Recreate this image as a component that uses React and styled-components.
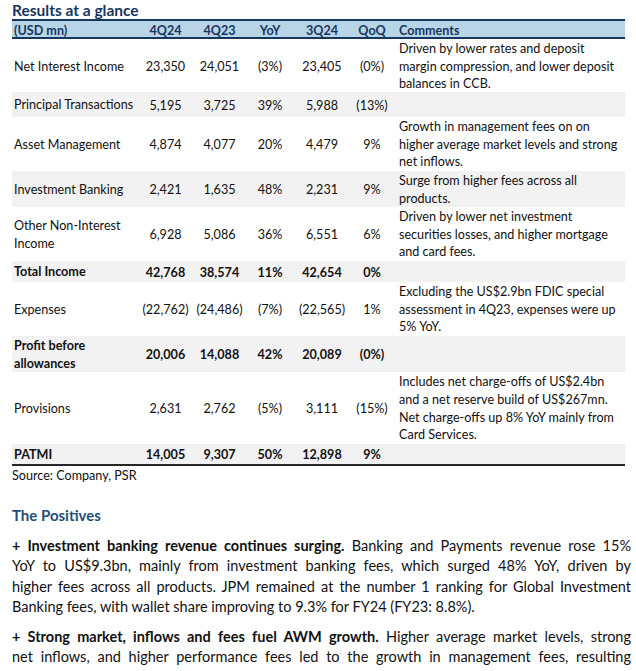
import React from 'react';
import styled, { createGlobalStyle } from 'styled-components';

const GlobalStyle = createGlobalStyle`
  html, body {
    margin: 0;
    padding: 0;
    background: #ffffff;
  }
  body {
    font-family: Lato, "Open Sans", sans-serif;
    color: #111111;
  }
`;

const Page = styled.div`
  width: 636px;
  height: 671px;
  overflow: hidden;
  padding: 0 5px 0 12px;
  box-sizing: border-box;
`;

const Title = styled.h2`
  margin: 0;
  height: 19px;
  line-height: 20px;
  font-size: 15.5px;
  font-weight: 700;
  color: #17365d;
`;

const Table = styled.div`
  width: 613px;
  font-size: 12.6px;
  border-bottom: 2px solid #262626;
`;

const Row = styled.div`
  display: grid;
  grid-template-columns: 130px 47px 61px 40px 64px 36px 1fr;
  align-items: center;
  height: ${p => p.h}px;
  padding-top: 1px;
  box-sizing: border-box;
  background: ${p => (p.shade ? '#f2f2f2' : '#ffffff')};
  font-weight: ${p => (p.bold ? 700 : 400)};
`;

const HeaderRow = styled(Row)`
  height: 20px;
  background: #b8d5e8;
  border-top: 2px solid #17365d;
  border-bottom: 2px solid #17365d;
  font-weight: 700;
  color: #17365d;
`;

const Label = styled.div`
  padding-left: 2px;
  line-height: 17.5px;
  white-space: nowrap;
`;

const Num = styled.div`
  text-align: center;
  white-space: nowrap;
`;

const Comment = styled.div`
  padding-left: 9px;
  line-height: 17.6px;
  white-space: nowrap;
`;

const Source = styled.div`
  font-size: 12.6px;
  height: 18px;
  line-height: 20px;
`;

const Heading = styled.h3`
  margin: 21px 0 11px;
  height: 20px;
  line-height: 20px;
  font-size: 15px;
  font-weight: 700;
  color: #1f4e79;
`;

const Para = styled.p`
  margin: 0 0 10px;
  width: 619px;
  font-size: 14.5px;
  line-height: 20.3px;
`;

const Line = styled.span`
  display: block;
  text-align: ${p => (p.last ? 'left' : 'justify')};
  text-align-last: ${p => (p.last ? 'left' : 'justify')};
`;

const rows = [
  { label: 'Net Interest Income', h: 53, v: ['23,350', '24,051', '(3%)', '23,405', '(0%)'], c: ['Driven by lower rates and deposit', 'margin compression, and lower deposit', 'balances in CCB.'] },
  { label: 'Principal Transactions', h: 25, shade: true, v: ['5,195', '3,725', '39%', '5,988', '(13%)'], c: [] },
  { label: 'Asset Management', h: 54, v: ['4,874', '4,077', '20%', '4,479', '9%'], c: ['Growth in management fees on on', 'higher average market levels and strong', 'net inflows.'] },
  { label: 'Investment Banking', h: 36, shade: true, v: ['2,421', '1,635', '48%', '2,231', '9%'], c: ['Surge from higher fees across all', 'products.'] },
  { label: ['Other Non-Interest', 'Income'], h: 54, v: ['6,928', '5,086', '36%', '6,551', '6%'], c: ['Driven by lower net investment', 'securities losses, and higher mortgage', 'and card fees.'] },
  { label: 'Total Income', h: 21, shade: true, bold: true, v: ['42,768', '38,574', '11%', '42,654', '0%'], c: [] },
  { label: 'Expenses', h: 54, v: ['(22,762)', '(24,486)', '(7%)', '(22,565)', '1%'], c: ['Excluding the US$2.9bn FDIC special', 'assessment in 4Q23, expenses were up', '5% YoY.'] },
  { label: ['Profit before', 'allowances'], h: 36, shade: true, bold: true, v: ['20,006', '14,088', '42%', '20,089', '(0%)'], c: [] },
  { label: 'Provisions', h: 72, v: ['2,631', '2,762', '(5%)', '3,111', '(15%)'], c: ['Includes net charge-offs of US$2.4bn', 'and a net reserve build of US$267mn.', 'Net charge-offs up 8% YoY mainly from', 'Card Services.'] },
  { label: 'PATMI', h: 20, shade: true, bold: true, v: ['14,005', '9,307', '50%', '12,898', '9%'], c: [] },
];

const lines = (arr) => arr.map((t, i) => (
  <React.Fragment key={i}>{i > 0 && <br />}{t}</React.Fragment>
));

export default function App() {
  return (
    <Page>
      <GlobalStyle />
      <Title>Results at a glance</Title>
      <Table>
        <HeaderRow>
          <Label>(USD mn)</Label>
          <Num>4Q24</Num>
          <Num>4Q23</Num>
          <Num>YoY</Num>
          <Num>3Q24</Num>
          <Num>QoQ</Num>
          <Comment>Comments</Comment>
        </HeaderRow>
        {rows.map((r, i) => (
          <Row key={i} h={r.h} shade={r.shade} bold={r.bold}>
            <Label>{Array.isArray(r.label) ? lines(r.label) : r.label}</Label>
            {r.v.map((n, j) => <Num key={j}>{n}</Num>)}
            <Comment>{lines(r.c)}</Comment>
          </Row>
        ))}
      </Table>
      <Source>Source: Company, PSR</Source>
      <Heading>The Positives</Heading>
      <Para>
        <Line><b>+ Investment banking revenue continues surging.</b> Banking and Payments revenue rose 15%</Line>
        <Line>YoY to US$9.3bn, mainly from investment banking fees, which surged 48% YoY, driven by</Line>
        <Line>higher fees across all products. JPM remained at the number 1 ranking for Global Investment</Line>
        <Line last>Banking fees, with wallet share improving to 9.3% for FY24 (FY23: 8.8%).</Line>
      </Para>
      <Para>
        <Line><b>+ Strong market, inflows and fees fuel AWM growth.</b> Higher average market levels, strong</Line>
        <Line>net inflows, and higher performance fees led to the growth in management fees, resulting</Line>
      </Para>
    </Page>
  );
}
